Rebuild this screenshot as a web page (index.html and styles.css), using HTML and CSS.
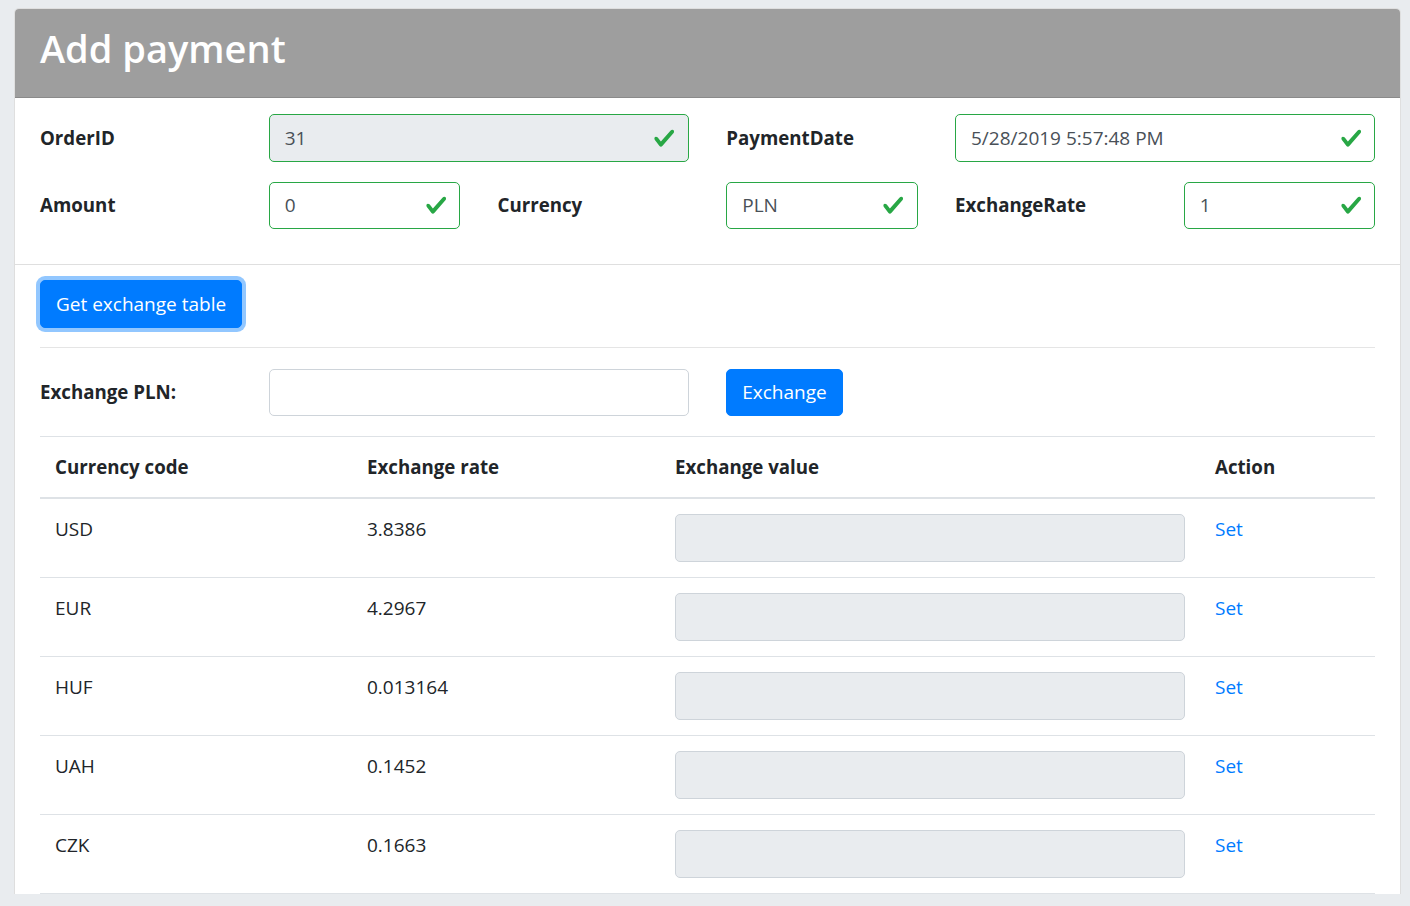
FILE: index.html
```html
<!DOCTYPE html>
<html lang="en">
<head>
<meta charset="utf-8">
<title>Add payment</title>
<link rel="stylesheet" href="styles.css">
</head>
<body>
<div class="page">
  <div class="card">
    <div class="card-header">
      <h2 class="title">Add payment</h2>
    </div>
    <div class="form-block">
      <div class="grid">
        <label class="lbl">OrderID</label>
        <div class="field span2">
          <div class="input readonly valid">31</div>
          <svg class="check" viewBox="0 0 8 8"><path d="M2.3 6.73L.6 4.53c-.4-1.04.46-1.4 1.1-.8l1.1 1.4 3.4-3.8c.6-.63 1.6-.27 1.2.7l-4 4.6c-.43.5-.8.4-1.1.1z"/></svg>
        </div>
        <label class="lbl">PaymentDate</label>
        <div class="field span2">
          <div class="input valid">5/28/2019 5:57:48 PM</div>
          <svg class="check" viewBox="0 0 8 8"><path d="M2.3 6.73L.6 4.53c-.4-1.04.46-1.4 1.1-.8l1.1 1.4 3.4-3.8c.6-.63 1.6-.27 1.2.7l-4 4.6c-.43.5-.8.4-1.1.1z"/></svg>
        </div>

        <label class="lbl">Amount</label>
        <div class="field">
          <div class="input valid">0</div>
          <svg class="check" viewBox="0 0 8 8"><path d="M2.3 6.73L.6 4.53c-.4-1.04.46-1.4 1.1-.8l1.1 1.4 3.4-3.8c.6-.63 1.6-.27 1.2.7l-4 4.6c-.43.5-.8.4-1.1.1z"/></svg>
        </div>
        <label class="lbl">Currency</label>
        <div class="field">
          <div class="input valid">PLN</div>
          <svg class="check" viewBox="0 0 8 8"><path d="M2.3 6.73L.6 4.53c-.4-1.04.46-1.4 1.1-.8l1.1 1.4 3.4-3.8c.6-.63 1.6-.27 1.2.7l-4 4.6c-.43.5-.8.4-1.1.1z"/></svg>
        </div>
        <label class="lbl">ExchangeRate</label>
        <div class="field">
          <div class="input valid">1</div>
          <svg class="check" viewBox="0 0 8 8"><path d="M2.3 6.73L.6 4.53c-.4-1.04.46-1.4 1.1-.8l1.1 1.4 3.4-3.8c.6-.63 1.6-.27 1.2.7l-4 4.6c-.43.5-.8.4-1.1.1z"/></svg>
        </div>
      </div>
    </div>
    <div class="card-body">
      <div class="btn-row">
        <button class="btn btn-focus">Get exchange table</button>
      </div>
      <hr class="divider">
      <div class="grid exchange-row">
        <label class="lbl">Exchange PLN:</label>
        <div class="field span2">
          <div class="input"></div>
        </div>
        <div class="btn-cell">
          <button class="btn">Exchange</button>
        </div>
      </div>
      <table class="table">
        <thead>
          <tr>
            <th class="c1">Currency code</th>
            <th class="c2">Exchange rate</th>
            <th class="c3">Exchange value</th>
            <th class="c4">Action</th>
          </tr>
        </thead>
        <tbody>
          <tr><td>USD</td><td>3.8386</td><td><div class="input readonly cell-input"></div></td><td><a class="link" href="#">Set</a></td></tr>
          <tr><td>EUR</td><td>4.2967</td><td><div class="input readonly cell-input"></div></td><td><a class="link" href="#">Set</a></td></tr>
          <tr><td>HUF</td><td>0.013164</td><td><div class="input readonly cell-input"></div></td><td><a class="link" href="#">Set</a></td></tr>
          <tr><td>UAH</td><td>0.1452</td><td><div class="input readonly cell-input"></div></td><td><a class="link" href="#">Set</a></td></tr>
          <tr><td>CZK</td><td>0.1663</td><td><div class="input readonly cell-input"></div></td><td><a class="link" href="#">Set</a></td></tr>
        </tbody>
      </table>
    </div>
  </div>
</div>
</body>
</html>
```
FILE: styles.css
```css
* { box-sizing: border-box; }
html, body { margin: 0; padding: 0; }
body {
  background: #e9ecef;
  font-family: "Open Sans", "Noto Sans", sans-serif;
  font-size: 19px;
  line-height: 30px;
  color: #212529;
}
.page {
  padding: 8px 9px 0 14px;
}
.card {
  background: #fff;
  border: 1px solid rgba(0,0,0,.125);
  border-radius: 5px;
  border-bottom: none;
  border-bottom-left-radius: 0;
  border-bottom-right-radius: 0;
}
.card-header {
  background: #9e9e9e;
  padding: 15px 25px;
  border-bottom: 1px solid rgba(0,0,0,.125);
  border-radius: 4px 4px 0 0;
}
.title {
  margin: 0 0 10px 0;
  font-size: 38px;
  line-height: 48px;
  font-weight: 600;
  color: #fff;
}
.form-block {
  padding: 16px 25px 35px;
  border-bottom: 1px solid rgba(0,0,0,.125);
}
.grid {
  display: grid;
  grid-template-columns: repeat(6, 1fr);
  column-gap: 37.5px;
  row-gap: 20px;
  align-items: center;
}
.span2 { grid-column: span 2; }
.lbl {
  font-weight: 700;
  font-size: 18.7px;
}
.field {
  position: relative;
}
.input {
  height: 47.5px;
  padding: 7.5px 15px;
  border: 1px solid #ced4da;
  border-radius: 5px;
  background: #fff;
  color: #495057;
  white-space: nowrap;
  overflow: hidden;
}
.input.readonly { background: #e9ecef; }
.input.valid { border-color: #28a745; padding-right: 45px; }
.check {
  position: absolute;
  right: 13px;
  top: 50%;
  width: 22.5px;
  height: 22.5px;
  margin-top: -11.25px;
  fill: #28a745;
}
.card-body {
  padding: 15px 25px 0;
}
.btn-row { display: flex; }
.btn {
  font-family: inherit;
  font-size: 19px;
  line-height: 30px;
  padding: 7.5px 15px;
  height: 47.5px;
  color: #fff;
  background: #007bff;
  border: 1px solid #007bff;
  border-radius: 5px;
  cursor: pointer;
}
.btn-focus {
  box-shadow: 0 0 0 4px rgba(38,143,255,.5);
}
.divider {
  margin: 19px 0 21px;
  border: 0;
  border-top: 1px solid rgba(0,0,0,.1);
  height: 0;
}
.exchange-row { margin-bottom: 20px; }
.btn-cell { display: flex; }
.table {
  width: 100%;
  border-collapse: collapse;
  table-layout: fixed;
}
.table th, .table td {
  padding: 15px;
  text-align: left;
  border-top: 1px solid #dee2e6;
}
.table th {
  vertical-align: bottom;
  border-bottom: 2px solid #dee2e6;
  font-weight: 700;
  font-size: 18.7px;
}
.table td { vertical-align: top; }
.table tbody tr:last-child td { border-bottom: 1px solid #dee2e6; }
.c1 { width: 312px; }
.c2 { width: 308px; }
.c3 { width: 540px; }
.c4 { width: 175px; }
.cell-input { height: 48px; }
.link {
  color: #007bff;
  text-decoration: none;
}
```
